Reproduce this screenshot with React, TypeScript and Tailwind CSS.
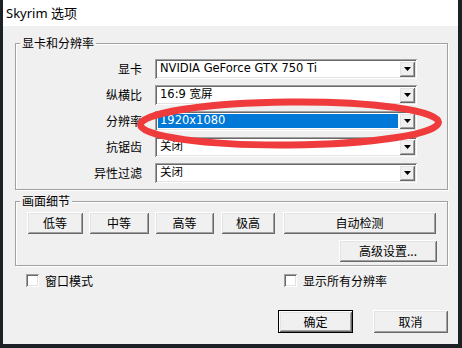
import React from "react";

const cjk = { fontFamily: '"Noto Sans CJK SC", "Noto Sans", sans-serif' };
const latin = { fontFamily: '"DejaVu Sans", "Noto Sans CJK SC", sans-serif' };

const raised =
  "shadow-[inset_1px_1px_0_#ffffff,inset_-1px_-1px_0_#696969,inset_2px_2px_0_#e3e3e3,inset_-2px_-2px_0_#a0a0a0]";
const sunken =
  "shadow-[inset_1px_1px_0_#a0a0a0,inset_-1px_-1px_0_#ffffff,inset_2px_2px_0_#696969,inset_-2px_-2px_0_#e3e3e3]";

function Combo({ value, selected }: { value: string; selected?: boolean }) {
  return (
    <div className={`w-[262px] h-[20px] bg-white flex p-[2px] ${sunken}`}>
      <div className="flex-1 flex items-center pl-[1px] pr-[1px] py-[1px]">
        <div
          className={`w-full h-full flex items-center pl-[2px] text-[11.5px] leading-none ${
            selected ? "bg-[#0078d7] text-white" : "text-black"
          }`}
          style={latin}
        >
          {value}
        </div>
      </div>
      <div className={`w-[16px] h-[16px] bg-[#f0f0f0] flex items-center justify-center ${raised}`}>
        <svg width="7" height="4" viewBox="0 0 7 4">
          <path d="M0 0H7L3.5 4Z" fill="#000" />
        </svg>
      </div>
    </div>
  );
}

function Row({ label, value, selected }: { label: string; value: string; selected?: boolean }) {
  return (
    <div className="flex items-center h-[20px]">
      <div className="w-[126px] text-right text-[12px] leading-none text-black" style={cjk}>
        {label}
      </div>
      <div className="ml-[13px]">
        <Combo value={value} selected={selected} />
      </div>
    </div>
  );
}

function Btn({ label, w, className = "", def }: { label: string; w: string; className?: string; def?: boolean }) {
  return (
    <div className={`${w} ${className} ${def ? "border border-black" : ""} flex`}>
      <div
        className={`flex-1 bg-[#f0f0f0] flex items-center justify-center text-[12px] leading-none text-black ${raised}`}
        style={cjk}
      >
        {label}
      </div>
    </div>
  );
}

function Check({ label }: { label: string }) {
  return (
    <div className="flex items-center h-[13px]">
      <div className={`w-[13px] h-[13px] bg-white ${sunken}`} />
      <span className="ml-[6px] text-[12px] leading-none text-black" style={cjk}>
        {label}
      </span>
    </div>
  );
}

function Group({ label, className, children }: { label: string; className: string; children: React.ReactNode }) {
  return (
    <div
      className={`relative border border-[#a0a0a0] shadow-[inset_1px_1px_0_#ffffff,1px_1px_0_#ffffff] ${className}`}
    >
      <span
        className="absolute left-[4px] -top-[8px] px-[2px] bg-[#f0f0f0] text-[12px] leading-[14px] text-black"
        style={cjk}
      >
        {label}
      </span>
      {children}
    </div>
  );
}

export default function App() {
  return (
    <div className="relative w-[462px] h-[348px] bg-[#1c2125] overflow-hidden">
      <div className="ml-[3px] w-[455px] h-[344px] flex flex-col">
        <div className="h-[26px] bg-white flex items-center pl-[3px]">
          <span className="text-[13px] leading-none text-black" style={{ fontFamily: '"Noto Sans", "Noto Sans CJK SC", sans-serif' }}>
            Skyrim 选项
          </span>
        </div>
        <div className="flex-1 bg-[#f0f0f0] flex flex-col pl-[12px] pr-[10px] pt-[17px]">
          <Group label="显卡和分辨率" className="h-[147px] pt-[15px] flex flex-col gap-[6px]">
            <Row label="显卡" value="NVIDIA GeForce GTX 750 Ti" />
            <Row label="纵横比" value="16:9 宽屏" />
            <Row label="分辨率" value="1920x1080" selected />
            <Row label="抗锯齿" value="关闭" />
            <Row label="异性过滤" value="关闭" />
          </Group>
          <Group label="画面细节" className="mt-[11px] h-[65px] pt-[10px] flex flex-col gap-[6px]">
            <div className="flex h-[22px] ml-[11px]">
              <Btn label="低等" w="w-[56px]" />
              <Btn label="中等" w="w-[60px]" className="ml-[6px]" />
              <Btn label="高等" w="w-[59px]" className="ml-[6px]" />
              <Btn label="极高" w="w-[54px]" className="ml-[7px]" />
              <Btn label="自动检测" w="w-[153px]" className="ml-[8px]" />
            </div>
            <div className="flex h-[22px] ml-[323px]">
              <Btn label="高级设置..." w="w-[98px]" />
            </div>
          </Group>
          <div className="flex mt-[8px] ml-[11px]">
            <div className="w-[258px]">
              <Check label="窗口模式" />
            </div>
            <Check label="显示所有分辨率" />
          </div>
          <div className="flex mt-[23px] ml-[263px] h-[23px]">
            <Btn label="确定" w="w-[76px]" def />
            <Btn label="取消" w="w-[76px]" className="ml-[20px]" />
          </div>
        </div>
      </div>
      <svg className="absolute left-0 top-0 pointer-events-none" width="462" height="348" viewBox="0 0 462 348">
        <ellipse
          cx="289.5"
          cy="123.5"
          rx="149"
          ry="21.5"
          fill="none"
          stroke="#ef3b3b"
          strokeWidth="7"
          transform="rotate(-0.5 289.5 123.5)"
        />
      </svg>
    </div>
  );
}
